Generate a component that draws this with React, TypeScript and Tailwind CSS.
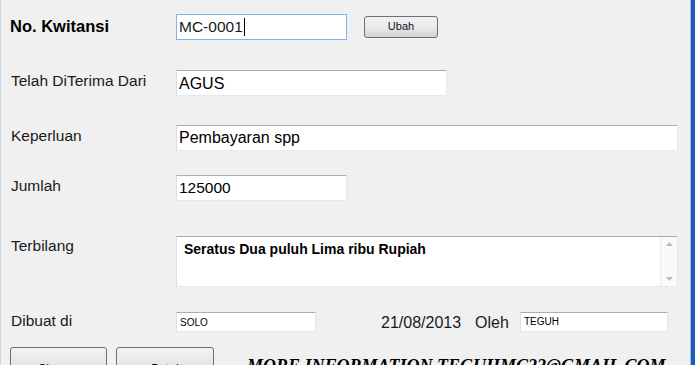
import React from 'react';

const field =
  'bg-white border border-t-[#abadb3] border-l-[#dbdfe6] border-r-[#e3e9ef] border-b-[#e3e9ef] px-[2px] text-black';

const label = "w-[176px] shrink-0 pl-[10px] text-[15.5px] text-[#1a1a1a]";

export default function App() {
  return (
    <div
      className="w-[695px] h-[365px] overflow-hidden bg-[#f0f0f0] flex"
      style={{ fontFamily: '"Liberation Sans", Arial, sans-serif' }}
    >
      <div className="w-[1px] bg-[#c9d6e6]" />
      <div className="flex-1 flex flex-col pt-[14px]">
        <div className="flex items-center h-[25px]">
          <div className="w-[175px] shrink-0 pl-[9px] text-[16.5px] font-bold text-black">No. Kwitansi</div>
          <div className="w-[171px] h-[26px] border border-[#7eb4ea] bg-white px-[2px] flex items-center text-[15.5px] text-[#1a1a1a]">
            MC-0001<span className="inline-block w-[1px] h-[18px] bg-black ml-[1px]" />
          </div>
          <button className="ml-[17px] w-[74px] h-[22px] rounded-[3px] border border-[#707070] bg-gradient-to-b from-[#f2f2f2] via-[#ebebeb] to-[#d2d2d2] text-[11px] text-[#1a0a1a]">
            Ubah
          </button>
        </div>

        <div className="flex items-center h-[25px] mt-[31px]">
          <div className={label + ' -mt-[3px]'}>Telah DiTerima Dari</div>
          <div className={field + ' w-[271px] h-[26px] -ml-[1px] flex items-center text-[16px] pt-[2px]'}>AGUS</div>
        </div>

        <div className="flex items-center h-[25px] mt-[30px]">
          <div className={label + ' -mt-[3px]'}>Keperluan</div>
          <div className={field + ' w-[502px] h-[26px] -ml-[1px] flex items-center text-[16px] text-[#1e2a1e]'}>Pembayaran spp</div>
        </div>

        <div className="flex items-center h-[25px] mt-[25px]">
          <div className={label + ' -mt-[3px]'}>Jumlah</div>
          <div className={field + ' w-[171px] h-[26px] -ml-[1px] flex items-center text-[15.5px]'}>125000</div>
        </div>

        <div className="flex items-start h-[51px] mt-[36px]">
          <div className={label + ' -mt-[2px]'}>Terbilang</div>
          <div className={field + ' w-[502px] h-[51px] -ml-[1px] flex !px-0'}>
            <div className="flex-1 pl-[7px] pt-[2px] text-[14px] font-bold">Seratus Dua puluh Lima ribu Rupiah</div>
            <div className="w-[17px] flex flex-col items-center justify-between py-[5px] bg-[#fafafa] border-l border-[#ececec]">
              <svg width="7" height="4" viewBox="0 0 7 4"><path d="M0 4 L3.5 0 L7 4 Z" fill="#bcbcbc" /></svg>
              <svg width="7" height="4" viewBox="0 0 7 4"><path d="M0 0 L3.5 4 L7 0 Z" fill="#bcbcbc" /></svg>
            </div>
          </div>
        </div>

        <div className="flex items-center h-[20px] mt-[25px]">
          <div className={label + ' -mt-[2px]'}>Dibuat di</div>
          <div className={field + ' w-[140px] h-[20px] -ml-[1px] flex items-center text-[10px] pl-[3px]'}>SOLO</div>
          <div className="ml-[65px] text-[16px] text-[#1a1a1a] pt-[2px]">21/08/2013</div>
          <div className="ml-[14px] text-[16px] text-[#1a1a1a] pt-[2px]">Oleh</div>
          <div className={field + ' ml-[11px] w-[148px] h-[20px] flex items-center text-[10px] pl-[3px] -mt-[1px]'}>TEGUH</div>
        </div>

        <div className="flex items-start mt-[15px]">
          <button className="ml-[9px] w-[97px] h-[30px] rounded-[3px] border border-[#707070] bg-gradient-to-b from-[#f2f2f2] to-[#dddddd] text-[12px] pt-[12px] text-black">
            Simpan
          </button>
          <button className="ml-[9px] w-[98px] h-[30px] rounded-[3px] border border-[#707070] bg-gradient-to-b from-[#f2f2f2] to-[#dddddd] text-[12px] pt-[12px] text-black">
            Batal
          </button>
          <div
            className="ml-[33px] mt-[10px] text-[18px] font-bold italic text-black whitespace-nowrap leading-none"
            style={{ fontFamily: '"Liberation Serif", "Times New Roman", serif' }}
          >
            MORE INFORMATION TEGUHMC22@GMAIL.COM
          </div>
        </div>
      </div>
      <div className="w-[1px] bg-[#9dbde0]" />
      <div className="w-[4px] bg-[#1c5eb5]" />
    </div>
  );
}
